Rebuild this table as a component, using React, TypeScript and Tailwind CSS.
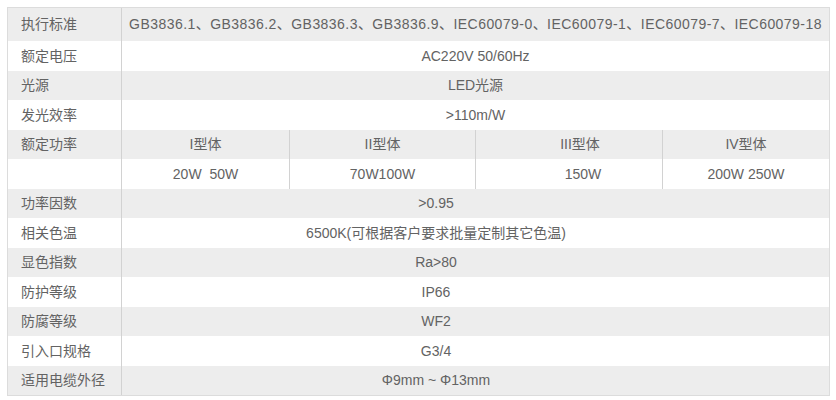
import React from "react";

const font = { fontFamily: '"Liberation Sans", "Noto Sans CJK SC", sans-serif' };

type Row = { label: string; value: string };

const topRows: Row[] = [
  { label: "额定电压", value: "AC220V 50/60Hz" },
  { label: "光源", value: "LED光源" },
  { label: "发光效率", value: ">110m/W" },
];

const bottomRows: Row[] = [
  { label: "功率因数", value: ">0.95" },
  { label: "相关色温", value: "6500K(可根据客户要求批量定制其它色温)" },
  { label: "显色指数", value: "Ra>80" },
  { label: "防护等级", value: "IP66" },
  { label: "防腐等级", value: "WF2" },
  { label: "引入口规格", value: "G3/4" },
  { label: "适用电缆外径", value: "Φ9mm ~ Φ13mm" },
];

function Label({ children }: { children?: React.ReactNode }) {
  return (
    <div className="w-[114px] shrink-0 flex items-center pl-[13px] border-r border-[#d2d2d2]">
      {children}
    </div>
  );
}

export default function App() {
  const h = (i: number) => (i % 2 === 0 ? "h-[30px]" : "h-[29px]");
  return (
    <div className="w-[836px] h-[400px] bg-white pt-[7px] pl-[7px]" style={font}>
      <div className="w-[823px] border border-[#dcdcdc] text-[14px] text-[#636363] flex flex-col">
        <div className="h-[33px] flex bg-[#ededed]">
          <Label>执行标准</Label>
          <div className="flex-1 flex items-center justify-center whitespace-nowrap tracking-[0.45px]">
            GB3836.1、GB3836.2、GB3836.3、GB3836.9、IEC60079-0、IEC60079-1、IEC60079-7、IEC60079-18
          </div>
        </div>
        {topRows.map((r, i) => (
          <div key={r.label} className={`${i === 1 ? "h-[29px]" : "h-[30px]"} flex ${i % 2 === 0 ? "bg-white" : "bg-[#ededed]"}`}>
            <Label>{r.label}</Label>
            <div className="flex-1 flex items-center justify-center">{r.value}</div>
          </div>
        ))}
        <div className="h-[29px] flex bg-[#ededed]">
          <Label>额定功率</Label>
          <div className="w-[168px] flex items-center justify-center border-r border-[#d2d2d2]">I型体</div>
          <div className="w-[186px] flex items-center justify-center border-r border-[#d2d2d2]">II型体</div>
          <div className="w-[187px] flex items-center justify-center border-r border-[#d2d2d2] pl-[22px]">III型体</div>
          <div className="flex-1 flex items-center justify-center">IV型体</div>
        </div>
        <div className="h-[30px] flex bg-white">
          <Label />
          <div className="w-[168px] flex items-center justify-center border-r border-[#d2d2d2]">20W&nbsp;&nbsp;50W</div>
          <div className="w-[186px] flex items-center justify-center border-r border-[#d2d2d2]">70W100W</div>
          <div className="w-[187px] flex items-center justify-center border-r border-[#d2d2d2] pl-[28px]">150W</div>
          <div className="flex-1 flex items-center justify-center">200W 250W</div>
        </div>
        {bottomRows.map((r, i) => (
          <div key={r.label} className={`${h(i + 1)} flex ${i % 2 === 0 ? "bg-[#ededed]" : "bg-white"}`}>
            <Label>{r.label}</Label>
            <div className="flex-1 flex items-center justify-center pr-[79px]">{r.value}</div>
          </div>
        ))}
      </div>
    </div>
  );
}
